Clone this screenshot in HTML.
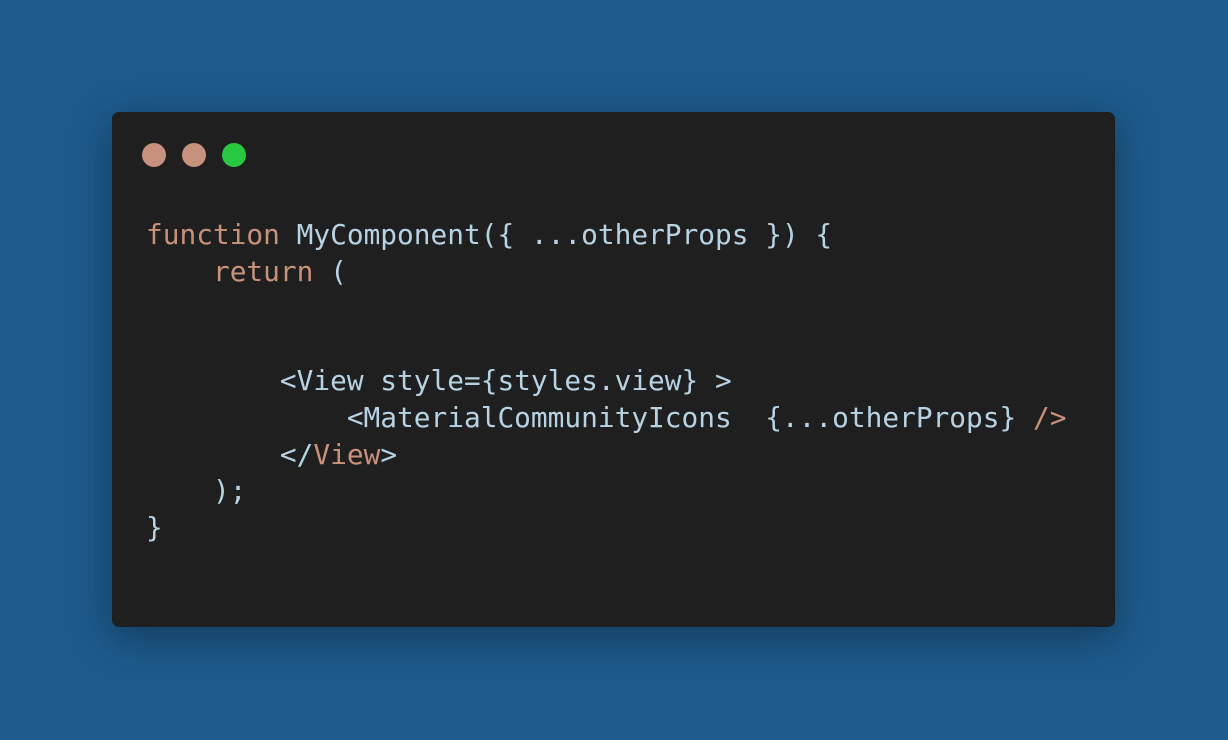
<!DOCTYPE html>
<html><head><style>
html,body{margin:0;padding:0}
body{width:1228px;height:740px;background:#1d5b8c;position:relative;overflow:hidden}
.win{position:absolute;left:112px;top:112px;width:1003px;height:515px;background:#1f1f1f;border-radius:7px;box-shadow:0 10px 40px rgba(0,0,0,0.35)}
.dot{position:absolute;top:143px;width:24px;height:24px;border-radius:50%}
pre{position:absolute;left:146px;top:217px;margin:0;font-family:"DejaVu Sans Mono","Liberation Mono",monospace;font-size:27.8px;line-height:36.6px;color:#b7d3e3}
.k{color:#c8917c}
</style></head><body>
<div class="win"></div>
<div class="dot" style="left:142px;background:#c8917e"></div>
<div class="dot" style="left:182px;background:#c8917e"></div>
<div class="dot" style="left:222px;background:#28c840"></div>
<pre><span class="k">function</span> MyComponent({ ...otherProps }) {
    <span class="k">return</span> (


        &lt;View style={styles.view} &gt;
            &lt;MaterialCommunityIcons  {...otherProps} <span class="k">/&gt;</span>
        &lt;/<span class="k">View</span>&gt;
    );
}</pre>
</body></html>
